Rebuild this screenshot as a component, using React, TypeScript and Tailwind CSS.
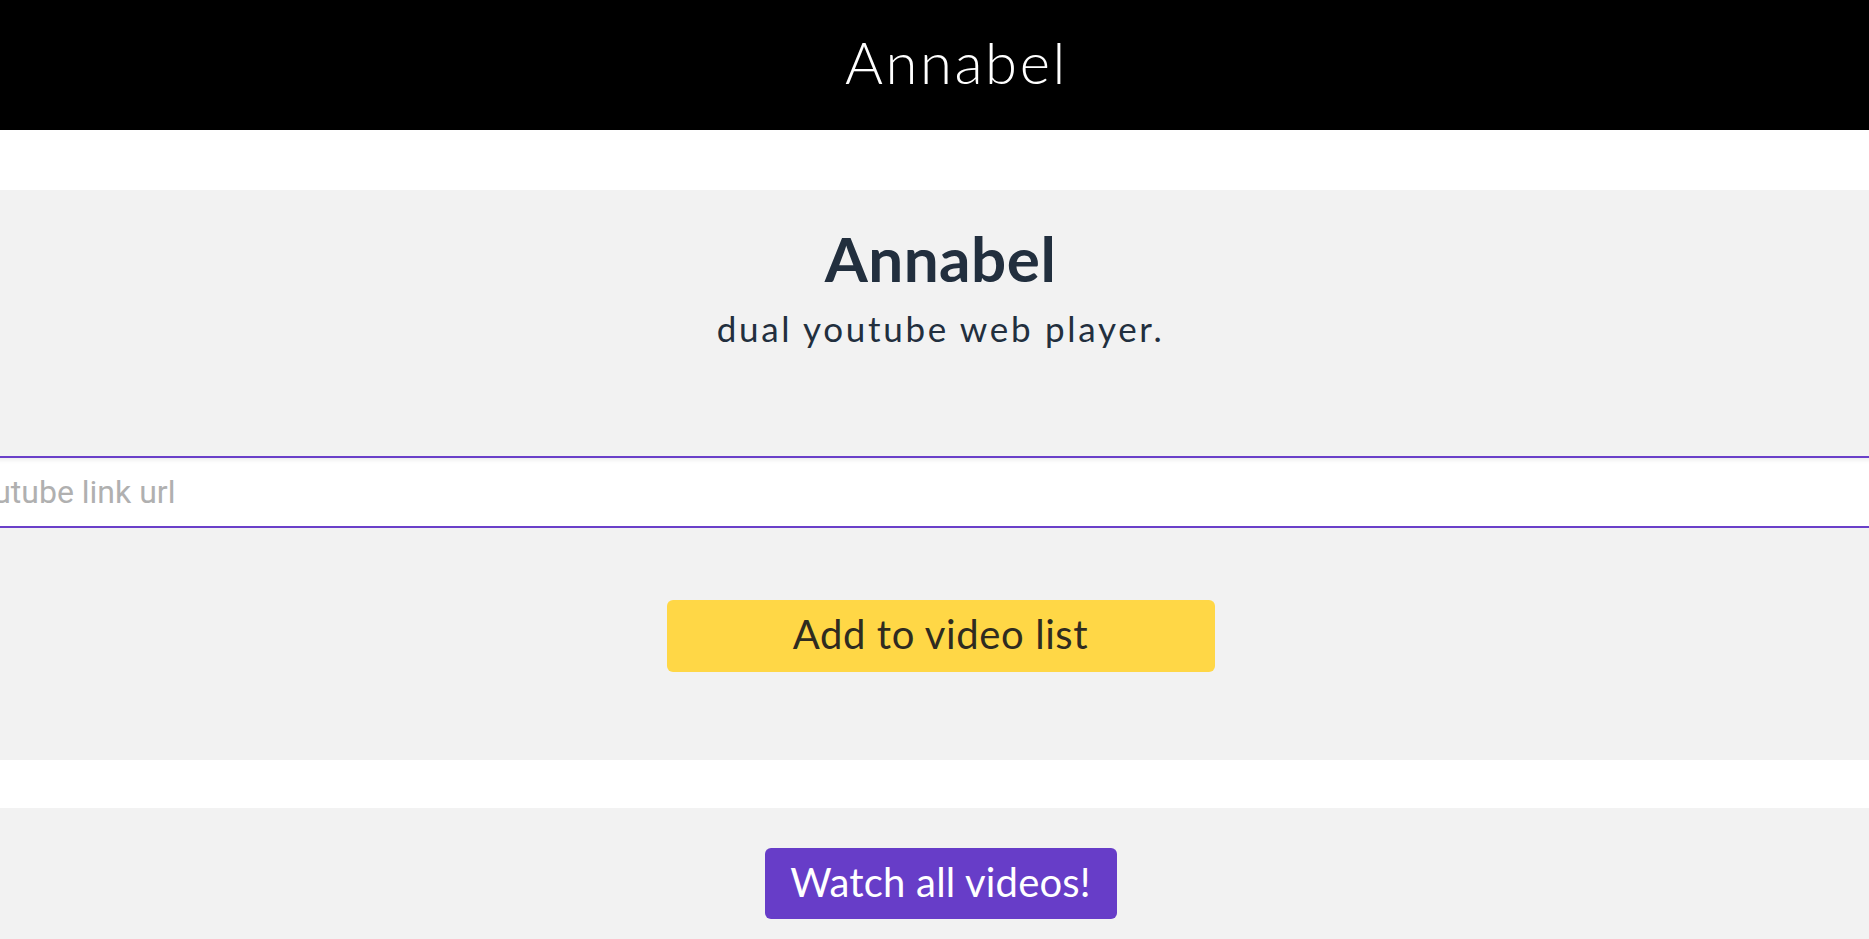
export default function App() {
  return (
    <div className="min-h-screen bg-white font-['Lato',sans-serif]">
      {/* top bar */}
      <header className="flex h-[130px] items-center justify-center bg-black pb-[6px] pl-[44px]">
        <h1 className="text-[58px] font-light leading-none tracking-[2.6px] text-white">Annabel</h1>
      </header>

      {/* add video section */}
      <section className="mt-[60px] h-[570px] bg-[#f2f2f2]">
        <div className="flex flex-col items-center pl-[12px] pt-[33px]">
          <h2 className="text-[62px] font-bold leading-[70px] tracking-[0.5px] text-[#222f3e]">Annabel</h2>
          <p className="mt-[15px] text-[35px] leading-[40px] tracking-[2.7px] text-[#222f3e]">dual youtube web player.</p>
        </div>

        <div className="mt-[108px] overflow-hidden">
          <input
            type="text"
            placeholder="youtube link url"
            className="-ml-[42px] h-[72px] w-[calc(100%+60px)] border-y-2 border-[#6a40c9] bg-white pl-[2px] font-['Roboto',sans-serif] text-[32px] text-[#333] shadow-[inset_0_4px_4px_-2px_rgba(0,0,0,0.08)] outline-none placeholder:text-[#b0b0b0]"
          />
        </div>

        <div className="mt-[72px] flex justify-center pl-[12px]">
          <button className="h-[72px] w-[548px] rounded-[6px] bg-[#ffd746] pb-[4px] text-[40px] tracking-[0.6px] text-[#2f2b20]">
            Add to video list
          </button>
        </div>
      </section>

      {/* watch section */}
      <section className="mt-[48px] h-[140px] bg-[#f2f2f2] pt-[40px]">
        <div className="flex justify-center pl-[12px]">
          <button className="h-[71px] w-[352px] rounded-[6px] bg-[#673dc8] pb-[4px] text-[40px] tracking-[0.2px] text-white">
            Watch all videos!
          </button>
        </div>
      </section>
    </div>
  );
}
